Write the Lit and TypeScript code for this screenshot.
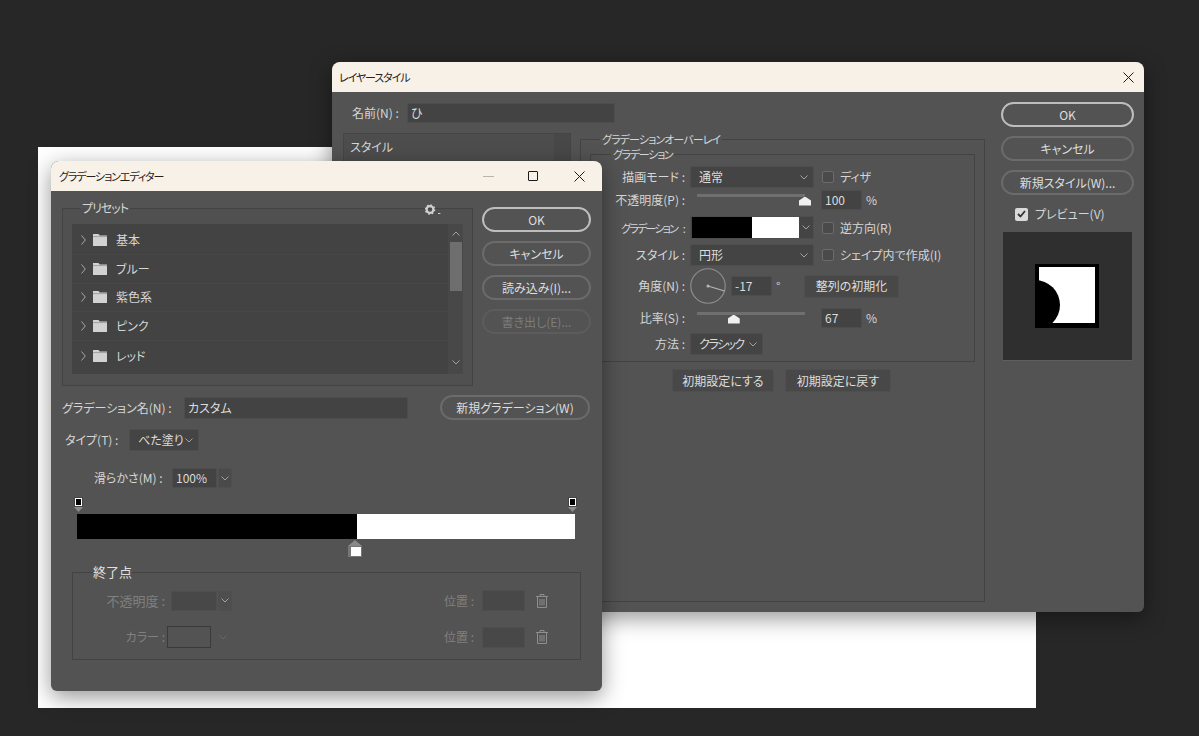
import { LitElement, html, css, svg } from "lit";
import { customElement } from "lit/decorators.js";

const chevronDown = html`<svg class="chev" width="8" height="5" viewBox="0 0 8 5"><path d="M.5.5 4 4 7.5.5" fill="none" stroke="currentColor" /></svg>`;
const closeIcon = html`<svg width="11" height="11" viewBox="0 0 11 11"><path d="M.5.5l10 10M10.5.5l-10 10" stroke="#1c1c1c" fill="none" /></svg>`;
const folderIcon = html`<svg width="14" height="12" viewBox="0 0 14 12"><path d="M0 0h5.5l1.2 1.6H14V12H0z" fill="#d2d2d2" /><path d="M0 2.6h14" stroke="#8d8d8d" stroke-width=".7" /></svg>`;
const rowArrow = html`<svg width="5" height="10" viewBox="0 0 5 10"><path d="M.5.5 4.3 5 .5 9.5" fill="none" stroke="#a8a8a8" /></svg>`;
const gearIcon = html`<svg class="gear" width="16" height="11" viewBox="0 0 16 11"><circle cx="5" cy="5.5" r="3.4" fill="none" stroke="#cfcfcf" stroke-width="2.2" /><circle cx="5" cy="5.5" r="4.6" fill="none" stroke="#cfcfcf" stroke-width="1.4" stroke-dasharray="1.6 2" /><path d="M13 9.5h2.4" stroke="#cfcfcf" /></svg>`;
const trashIcon = html`<svg class="trash" width="12" height="14" viewBox="0 0 12 14"><path d="M0 2.5h12M4 2.5V.5h4v2M1.5 2.5v11h9v-11M4 5v6.5M6 5v6.5M8 5v6.5" fill="none" stroke="#8e8e8e" /></svg>`;

function slider(pct: number) {
  return html`<div class="slider">
    <i class="thumb" style="left:${pct}%"></i>
  </div>`;
}

function select(text: string, width: number) {
  return html`<div class="select" style="width:${width}px">
    <span>${text}</span>${chevronDown}
  </div>`;
}

@customElement("app-root")
export class AppRoot extends LitElement {
  static styles = css`
    :host {
      display: block;
      position: relative;
      height: 736px;
      overflow: hidden;
      background: #272727;
      font: 12px/16px "Noto Sans CJK JP", "Noto Sans", sans-serif;
      font-feature-settings: "palt";
      color: #d6d6d6;
    }
    * {
      box-sizing: border-box;
    }
    .doc {
      position: absolute;
      left: 38px;
      top: 147px;
      width: 998px;
      height: 561px;
      background: #fff;
    }
    .dialog {
      position: absolute;
      display: flex;
      flex-direction: column;
      background: #535353;
      border-radius: 8px 8px 6px 6px;
      box-shadow: 0 6px 22px rgba(0, 0, 0, 0.42);
      overflow: hidden;
    }
    .back {
      left: 332px;
      top: 62px;
      width: 812px;
      height: 550px;
    }
    .front {
      left: 51px;
      top: 161px;
      width: 551px;
      height: 530px;
    }
    .title {
      flex: none;
      display: flex;
      align-items: center;
      height: 30px;
      padding: 0 10px 0 8px;
      background: #f8f1e8;
      color: #222;
    }
    .title .name {
      flex: 1;
      font-size: 11px;
      letter-spacing: -1.1px;
    }
    .back .title {
      padding-left: 7px;
    }
    .win-btns {
      display: flex;
      align-items: center;
      gap: 34px;
      padding-right: 7px;
    }
    .win-btns svg {
      margin-left: 2px;
    }
    .min {
      width: 11px;
      height: 1px;
      background: #b9b5af;
    }
    .max {
      width: 10px;
      height: 10px;
      border: 1px solid #1c1c1c;
      border-radius: 1px;
    }
    fieldset {
      margin: 0;
      min-width: 0;
      border: 1px solid #434343;
    }
    legend {
      padding: 0 2px;
      line-height: 14px;
    }
    .input {
      display: flex;
      align-items: center;
      padding: 0 3px;
      background: #434343;
      border: 1px solid #4d4d4d;
      color: #dcdcdc;
    }
    .select {
      display: flex;
      align-items: center;
      justify-content: space-between;
      height: 22px;
      padding: 0 5px 0 8px;
      background: #444;
      border: 1px solid #4e4e4e;
      border-radius: 2px;
      color: #dcdcdc;
      white-space: nowrap;
    }
    .select.narrow span {
      letter-spacing: -1.5px;
    }
    .chev {
      flex: none;
      color: #a2a2a2;
    }
    .pill {
      display: flex;
      align-items: center;
      justify-content: center;
      height: 25px;
      border: 2px solid #6b6b6b;
      border-radius: 13px;
      color: #dedede;
    }
    .pill.primary {
      border-color: #bdbdbd;
    }
    .pill.off {
      border-color: #5c5c5c;
      color: #7c7c7c;
    }
    .flat {
      display: flex;
      align-items: center;
      justify-content: center;
      height: 23px;
      background: #484848;
      border: 1px solid #4f4f4f;
      border-radius: 2px;
      color: #dedede;
    }
    .check {
      display: flex;
      align-items: center;
      gap: 6px;
    }
    .box {
      flex: none;
      width: 12px;
      height: 12px;
      background: #4a4a4a;
      border: 1px solid #6b6b6b;
      border-radius: 2px;
    }
    .box.on {
      display: flex;
      align-items: center;
      justify-content: center;
      width: 13px;
      height: 13px;
      background: #dadada;
      border: 0;
    }
    .slider {
      position: relative;
      width: 108px;
      height: 3px;
      margin: -10px 0 0 7px;
      background: #6f6f6f;
    }
    .thumb {
      position: absolute;
      top: 3px;
      width: 12px;
      height: 9px;
      margin-left: -6px;
      background: #f0f0f0;
      clip-path: polygon(50% 0, 100% 45%, 100% 100%, 0 100%, 0 45%);
    }

    /* layer style dialog */
    .back-body {
      flex: 1;
      display: flex;
      padding-right: 10px;
      min-height: 0;
    }
    .back-main {
      width: 653px;
    }
    .name-row {
      display: flex;
      align-items: center;
      height: 20px;
      margin: 11px 0 7px 20px;
    }
    .name-row .label {
      width: 55px;
    }
    .name-row .input {
      width: 208px;
      height: 20px;
    }
    .split {
      display: flex;
      align-items: flex-start;
    }
    .styles {
      flex: none;
      width: 228px;
      height: 60px;
      margin: 3px 9px 0 11px;
      background: #484848;
      border: 1px solid #464646;
    }
    .styles div {
      width: 210px;
      height: 100%;
      padding: 5px 6px;
      background: #4d4d4d;
    }
    .overlay {
      width: 405px;
      height: 470px;
      margin-top: 2px;
      padding: 1px 9px 0;
    }
    .overlay > legend {
      margin-left: 10px;
      font-size: 11px;
      letter-spacing: -0.9px;
    }
    .grad-group {
      padding: 5px 0 6px;
    }
    .grad-group legend {
      margin-left: 20px;
      font-size: 11px;
      letter-spacing: -1.3px;
    }
    .row {
      display: grid;
      grid-template-columns: 99px 132px 1fr;
      align-items: center;
    }
    .row .label {
      padding-right: 5px;
      text-align: right;
    }
    .row .label.tight {
      padding-right: 6px;
      font-size: 11px;
      letter-spacing: -1.8px;
      word-spacing: 5px;
    }
    .row .num {
      display: flex;
      align-items: center;
      gap: 4px;
      margin-left: -1px;
    }
    .num .input {
      width: 41px;
      height: 20px;
    }
    .r2 {
      margin-top: 2px;
    }
    .r3 {
      margin-top: 6px;
    }
    .r4 {
      margin-top: 5px;
    }
    .r5 {
      margin-top: 2px;
    }
    .r6 {
      margin-top: 4px;
    }
    .r7 {
      margin-top: 5px;
    }
    .swatch {
      display: flex;
      align-items: center;
      justify-content: flex-end;
      width: 124px;
      height: 23px;
      padding: 0 3px 0 1px;
      background: #444;
      border: 1px solid #4e4e4e;
    }
    .swatch i {
      flex: 1;
      align-self: stretch;
      margin-right: 3px;
      background: linear-gradient(90deg, #000 56%, #fff 56%);
    }
    .angle {
      grid-column: 2 / -1;
      display: flex;
      align-items: center;
    }
    .angle svg {
      flex: none;
      display: block;
    }
    .angle .input {
      width: 41px;
      height: 20px;
      margin: 0 0 0 5px;
    }
    .angle .deg {
      width: 32px;
      padding-left: 4px;
    }
    .angle .flat {
      width: 95px;
    }
    .defaults {
      display: flex;
      gap: 11px;
      margin: 7px 0 0 82px;
    }
    .side {
      flex: none;
      width: 133px;
      margin: 10px 0 0 16px;
      display: flex;
      flex-direction: column;
      gap: 9px;
    }
    .side .check {
      margin: 2px 0 0 14px;
      gap: 7px;
    }
    .preview {
      display: flex;
      align-items: center;
      justify-content: center;
      width: 129px;
      height: 129px;
      margin: 1px 0 0 2px;
      padding: 0 1px 1px 0;
      background: #2f2f2f;
      border-bottom: 1px solid #5f5f5f;
    }

    /* gradient editor dialog */
    .front-body {
      flex: 1;
      padding: 10px 11px 0;
    }
    .top {
      display: flex;
      position: relative;
    }
    .gear {
      position: absolute;
      left: 363px;
      top: 3px;
    }
    .presets {
      flex: none;
      width: 411px;
      padding: 5px 9px 11px;
      background: #505050;
    }
    .presets legend {
      margin: 0 0 4px 8px;
      letter-spacing: -1px;
    }
    .list {
      display: flex;
      height: 150px;
      background: #434343;
    }
    .items {
      flex: 1;
      padding-top: 2px;
    }
    .item {
      display: flex;
      align-items: center;
      height: 28.8px;
      padding-left: 9px;
      border-bottom: 1px solid #484848;
    }
    .item:last-child {
      border-bottom: 0;
    }
    .item svg:nth-child(2) {
      margin: 0 9px 0 7px;
    }
    .scroll {
      flex: none;
      display: flex;
      flex-direction: column;
      align-items: center;
      width: 15px;
      background: #484848;
      color: #a2a2a2;
    }
    .scroll .up {
      height: 18px;
      padding-top: 6px;
      transform: scaleY(-1);
      display: flex;
      align-items: flex-end;
      padding-bottom: 7px;
    }
    .scroll .bar {
      flex: none;
      width: 12px;
      height: 49px;
      background: #6e6e6e;
    }
    .scroll .down {
      margin-top: auto;
      padding-bottom: 6px;
    }
    .front-side {
      flex: none;
      width: 109px;
      margin: 6px 0 0 9px;
      display: flex;
      flex-direction: column;
      gap: 9px;
    }
    .gname {
      display: flex;
      align-items: center;
      height: 25px;
      margin-top: 9px;
    }
    .gname .label {
      width: 122px;
    }
    .gname .input {
      width: 224px;
      height: 22px;
    }
    .gname .pill {
      width: 150px;
      margin-left: 32px;
    }
    .gtype {
      display: flex;
      align-items: center;
      margin: 9px 0 0 3px;
    }
    .gtype .label {
      width: 64px;
    }
    .smooth {
      display: flex;
      align-items: center;
      height: 20px;
      margin: 17px 0 0 32px;
    }
    .smooth .label {
      width: 78px;
    }
    .smooth .input {
      width: 45px;
      height: 20px;
    }
    .combo {
      display: flex;
      align-items: center;
      justify-content: center;
      width: 14px;
      height: 20px;
      background: #4a4a4a;
      border: 1px solid #4f4f4f;
      margin-left: 1px;
    }
    .ramp {
      position: relative;
      width: 498px;
      height: 25px;
      margin: 26px 0 0 15px;
      background: linear-gradient(90deg, #000 56.3%, #fff 56.3%);
    }
    .stop {
      position: absolute;
    }
    .stop.top-stop {
      top: -17px;
      width: 9px;
      height: 15px;
    }
    .stop b {
      display: block;
      width: 9px;
      height: 10px;
      background: #000;
      border: 2px solid #fff;
      outline: 1px solid #444;
      outline-offset: -1px;
    }
    .stop u {
      display: block;
      width: 9px;
      height: 5px;
      background: #8a8a8a;
      clip-path: polygon(0 0, 100% 0, 50% 100%);
    }
    .mid-stop {
      top: 26px;
      left: 271px;
      width: 14px;
    }
    .mid-stop u {
      width: 14px;
      height: 6px;
      clip-path: polygon(50% 0, 100% 100%, 0 100%);
    }
    .mid-stop b {
      width: 14px;
      height: 11px;
      background: #fff;
      border: 1px solid #777;
      border-left-width: 3px;
      outline: 0;
    }
    .endpoint {
      width: 509px;
      margin: 26px 0 0 10px;
      padding: 9px 32px 11px 0;
      color: #808080;
    }
    .endpoint legend {
      margin: 0 0 2px 20px;
      padding: 0;
      font-size: 13px;
      color: #e0e0e0;
    }
    .ep-row {
      display: flex;
      align-items: center;
    }
    .ep-row + .ep-row {
      margin-top: 15px;
    }
    .ep-row .label {
      width: 92px;
      text-align: right;
    }
    .ep-row .label.big {
      font-size: 13px;
    }
    .dim {
      height: 20px;
      background: #484848;
      border: 1px solid #4e4e4e;
    }
    .ep-row .dim.a {
      width: 46px;
      margin-left: 6px;
    }
    .ep-row .combo {
      height: 20px;
      background: #4e4e4e;
      color: #6b6b6b;
    }
    .color {
      width: 44px;
      height: 22px;
      margin: 0 8px 0 2px;
      border: 1px solid #3a3a3a;
    }
    .color + .chev {
      color: #686868;
    }
    .pos {
      display: flex;
      align-items: center;
      margin-left: auto;
    }
    .pos .dim {
      width: 43px;
      height: 21px;
      margin: 0 11px 0 8px;
    }
  `;

  private renderLayerStyle() {
    return html`<section class="dialog back">
      <div class="title">
        <span class="name">レイヤースタイル</span>
        ${closeIcon}
      </div>
      <div class="back-body">
        <div class="back-main">
          <div class="name-row">
            <span class="label">名前(N) :</span>
            <div class="input">ひ</div>
          </div>
          <div class="split">
            <div class="styles"><div>スタイル</div></div>
            <fieldset class="overlay">
              <legend>グラデーションオーバーレイ</legend>
              <fieldset class="grad-group">
                <legend>グラデーション</legend>
                <div class="row">
                  <span class="label">描画モード :</span>
                  ${select("通常", 124)}
                  <div class="check"><i class="box"></i>ディザ</div>
                </div>
                <div class="row r2">
                  <span class="label">不透明度(P) :</span>
                  ${slider(100)}
                  <div class="num"><div class="input">100</div>%</div>
                </div>
                <div class="row r3">
                  <span class="label tight">グラデーション :</span>
                  <div class="swatch"><i></i>${chevronDown}</div>
                  <div class="check"><i class="box"></i>逆方向(R)</div>
                </div>
                <div class="row r4">
                  <span class="label">スタイル :</span>
                  ${select("円形", 124)}
                  <div class="check"><i class="box"></i>シェイプ内で作成(I)</div>
                </div>
                <div class="row r5">
                  <span class="label">角度(N) :</span>
                  <div class="angle">
                    <svg width="36" height="36" viewBox="0 0 37 37">
                      ${svg`<circle cx="18.5" cy="18.5" r="17.7" fill="none" stroke="#8d8d8d" stroke-width="1.2" />
                      <path d="M18.5 18.5 35.5 23.7" stroke="#b5b5b5" stroke-width="1.2" />
                      <circle cx="18.5" cy="18.5" r="1.6" fill="#b5b5b5" />`}
                    </svg>
                    <div class="input">-17</div>
                    <span class="deg">°</span>
                    <div class="flat">整列の初期化</div>
                  </div>
                </div>
                <div class="row r6">
                  <span class="label">比率(S) :</span>
                  ${slider(34)}
                  <div class="num"><div class="input">67</div>%</div>
                </div>
                <div class="row r7">
                  <span class="label">方法 :</span>
                  <div class="select narrow" style="width:73px"><span>クラシック</span>${chevronDown}</div>
                </div>
              </fieldset>
              <div class="defaults">
                <div class="flat" style="width:102px">初期設定にする</div>
                <div class="flat" style="width:106px">初期設定に戻す</div>
              </div>
            </fieldset>
          </div>
        </div>
        <div class="side">
          <div class="pill primary">OK</div>
          <div class="pill">キャンセル</div>
          <div class="pill">新規スタイル(W)...</div>
          <div class="check">
            <i class="box on">
              <svg width="9" height="8" viewBox="0 0 9 8"><path d="M1 4l2.5 2.5L8 1" fill="none" stroke="#333" stroke-width="1.8" /></svg>
            </i>
            プレビュー(V)
          </div>
          <div class="preview">
            <svg width="64" height="64" viewBox="0 0 64 64">
              <rect width="64" height="64" fill="#000" />
              <rect x="4" y="3" width="56" height="56" fill="#fff" />
              <circle cx="0" cy="41" r="25" fill="#000" />
            </svg>
          </div>
        </div>
      </div>
    </section>`;
  }

  private renderGradientEditor() {
    const presets = ["基本", "ブルー", "紫色系", "ピンク", "レッド"];
    return html`<section class="dialog front">
      <div class="title">
        <span class="name">グラデーションエディター</span>
        <div class="win-btns">
          <i class="min"></i><i class="max"></i>${closeIcon}
        </div>
      </div>
      <div class="front-body">
        <div class="top">
          <fieldset class="presets">
            <legend>プリセット</legend>
            <div class="list">
              <div class="items">
                ${presets.map(
                  (p) => html`<div class="item">${rowArrow}${folderIcon}<span>${p}</span></div>`
                )}
              </div>
              <div class="scroll">
                <div class="up">${chevronDown}</div>
                <div class="bar"></div>
                <div class="down">${chevronDown}</div>
              </div>
            </div>
          </fieldset>
          ${gearIcon}
          <div class="front-side">
            <div class="pill primary">OK</div>
            <div class="pill">キャンセル</div>
            <div class="pill">読み込み(I)...</div>
            <div class="pill off">書き出し(E)...</div>
          </div>
        </div>
        <div class="gname">
          <span class="label">グラデーション名(N) :</span>
          <div class="input">カスタム</div>
          <div class="pill">新規グラデーション(W)</div>
        </div>
        <div class="gtype">
          <span class="label">タイプ(T) :</span>
          ${select("べた塗り", 70)}
        </div>
        <div class="smooth">
          <span class="label">滑らかさ(M) :</span>
          <div class="input">100%</div>
          <div class="combo">${chevronDown}</div>
        </div>
        <div class="ramp">
          <div class="stop top-stop" style="left:-3px"><b></b><u></u></div>
          <div class="stop top-stop" style="left:491px"><b></b><u></u></div>
          <div class="stop mid-stop"><u></u><b></b></div>
        </div>
        <fieldset class="endpoint">
          <legend>終了点</legend>
          <div class="ep-row">
            <span class="label big">不透明度 :</span>
            <div class="dim a"></div>
            <div class="combo">${chevronDown}</div>
            <div class="pos"><span>位置 :</span><div class="dim"></div>${trashIcon}</div>
          </div>
          <div class="ep-row">
            <span class="label">カラー :</span>
            <div class="color"></div>
            ${chevronDown}
            <div class="pos"><span>位置 :</span><div class="dim"></div>${trashIcon}</div>
          </div>
        </fieldset>
      </div>
    </section>`;
  }

  render() {
    return html`<div class="doc"></div>
      ${this.renderLayerStyle()} ${this.renderGradientEditor()}`;
  }
}
